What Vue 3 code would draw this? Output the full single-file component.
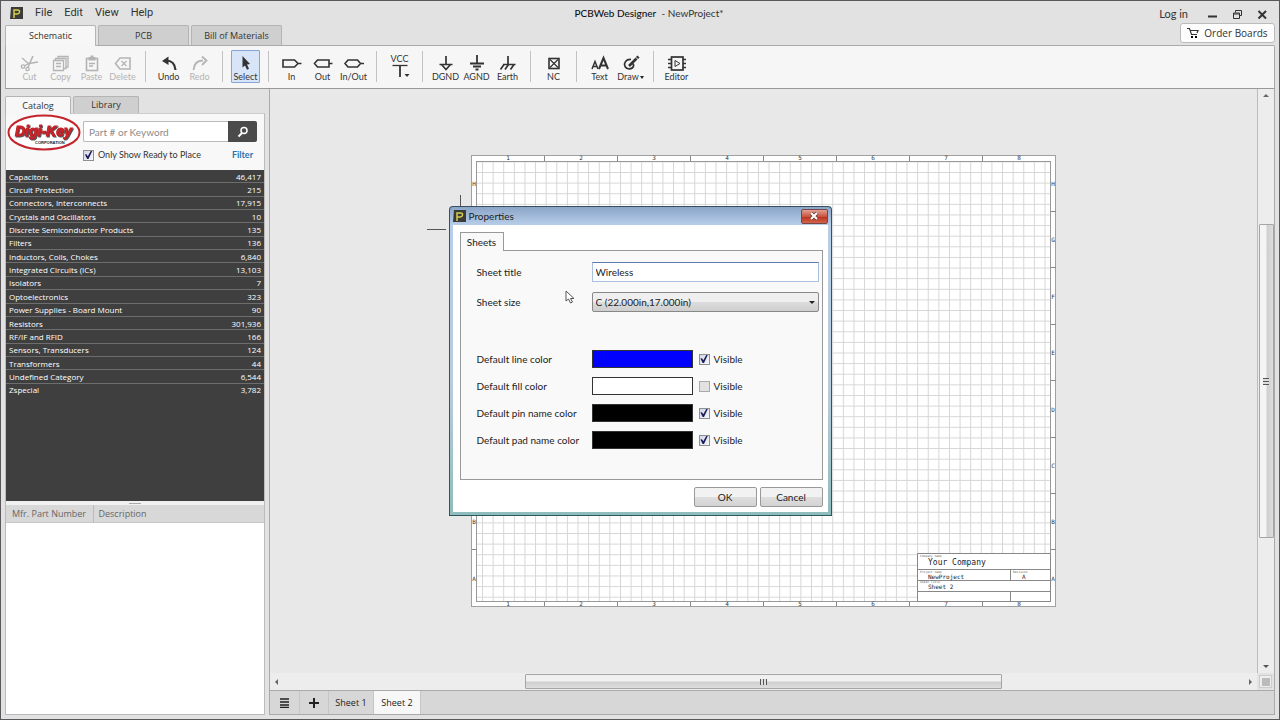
<script setup>
import { ref } from 'vue'

const menus = ['File', 'Edit', 'View', 'Help']
const workspaces = ['Schematic', 'PCB', 'Bill of Materials']

const tools = [
  { id: 'cut', label: 'Cut', off: true },
  { id: 'copy', label: 'Copy', off: true },
  { id: 'paste', label: 'Paste', off: true },
  { id: 'delete', label: 'Delete', off: true },
  { id: 's1' },
  { id: 'undo', label: 'Undo' },
  { id: 'redo', label: 'Redo', off: true },
  { id: 's2' },
  { id: 'select', label: 'Select', on: true },
  { id: 's3' },
  { id: 'in', label: 'In' },
  { id: 'out', label: 'Out' },
  { id: 'inout', label: 'In/Out' },
  { id: 's4' },
  { id: 'vcc', label: 'VCC', top: true },
  { id: 's5' },
  { id: 'dgnd', label: 'DGND' },
  { id: 'agnd', label: 'AGND' },
  { id: 'earth', label: 'Earth' },
  { id: 's6' },
  { id: 'nc', label: 'NC' },
  { id: 's7' },
  { id: 'text', label: 'Text' },
  { id: 'draw', label: 'Draw', drop: true },
  { id: 's8' },
  { id: 'editor', label: 'Editor' }
]

const icons = {
  cut: '<g fill="none" stroke="currentColor" stroke-width="1.3"><path d="M4 4 11 10M20 8 11 9.500 6 12"/><path d="M15 2 10 13" stroke-width="1.600"/><circle cx="5" cy="12.500" r="1.700"/><circle cx="9.500" cy="15" r="1.700"/></g>',
  copy: '<g fill="#f5f5f5" stroke="currentColor" stroke-width="1.3"><path d="M9 2.500H19V13H9Z"/><path d="M6.500 4.500H17V14.500H6.500Z"/><path d="M4.500 6.500H14.500V16.500H4.500Z"/><path d="M7 9.500H12M7 12.500H12"/></g>',
  paste: '<rect x="6.500" y="4.500" width="11" height="12" fill="none" stroke="currentColor" stroke-width="1.600"/><path d="M8.500 3H10.500V1.500H13.500V3H15.500V6.500H8.500Z" fill="currentColor"/><path d="M9 9.500H15M9 12H13" stroke="currentColor" stroke-width="1.500"/>',
  delete: '<path d="M9 4H19V15H9L4.500 9.500Z" fill="none" stroke="currentColor" stroke-width="1.600"/><path d="M10.500 7 15.500 12M15.500 7 10.500 12" stroke="currentColor" stroke-width="1.200"/>',
  undo: '<path d="M9 6.500C15 6.500 18 10 18.500 16" fill="none" stroke="currentColor" stroke-width="2.200"/><path d="M5 7 11.500 2.500V11Z" fill="currentColor"/>',
  redo: '<path d="M15 6.500C9 6.500 6 10 5.500 16" fill="none" stroke="currentColor" stroke-width="1.800"/><path d="M14 2.500 18.500 6.500 14 11" fill="none" stroke="currentColor" stroke-width="1.800"/>',
  select: '<path d="M8.500 2V13.500L11 11.500 13 15.800 15 14.800 13 10.500 16 10Z" fill="currentColor"/>',
  in: '<path d="M3 6H14.500L18 9.500 14.500 13H3ZM18 9.500H21.500" fill="none" stroke="currentColor" stroke-width="1.600"/>',
  out: '<path d="M6.500 6H18V13H6.500L3.500 9.500ZM18 9.500H21.500" fill="none" stroke="currentColor" stroke-width="1.600"/>',
  inout: '<path d="M6 6H15.500L18.500 9.500 15.500 13H6L3 9.500ZM18.500 9.500H22" fill="none" stroke="currentColor" stroke-width="1.600"/>',
  vcc: '<path d="M4.500 1.500H19.500" stroke="currentColor" stroke-width="1.300"/><path d="M12 1.500V13" stroke="currentColor" stroke-width="1.800"/><path d="M16.500 10H21.500L19 13Z" fill="currentColor"/>',
  dgnd: '<path d="M12 2V10M5.500 10.500H18.500M7.500 10.500 12 15.500 16.500 10.500" fill="none" stroke="currentColor" stroke-width="1.700"/>',
  agnd: '<path d="M12 1V9.500M5 9.500H19M8 12.500H16M10.500 15.500H13.500" fill="none" stroke="currentColor" stroke-width="1.800"/>',
  earth: '<path d="M12 2V10M7 10.500H19.500M8 10.500 4.500 15.500M12.500 10.500 9 15.500M18 10.500 14.500 15.500" fill="none" stroke="currentColor" stroke-width="1.700"/>',
  nc: '<rect x="7" y="4.500" width="10" height="10" fill="none" stroke="currentColor" stroke-width="1.600"/><path d="M8 5.500 16 13.500M16 5.500 8 13.500" stroke="currentColor" stroke-width="1.200"/>',
  text: '<path d="M4 15 7 7.500 10 15M5 12.500H9" fill="none" stroke="currentColor" stroke-width="1.500"/><path d="M11 15 15.500 4 20 15M12.500 11.500H18.500" fill="none" stroke="currentColor" stroke-width="2"/>',
  draw: '<path d="M12 5.500C7 5 4.500 9 6 12.500 8 16 13.500 15.500 14.500 12 15 10.500 14 9.500 13 9.500" fill="none" stroke="currentColor" stroke-width="1.700"/><path d="M10 12 17.500 4.500" stroke="currentColor" stroke-width="2.600"/><path d="M18 4 19.500 2.500" stroke="currentColor" stroke-width="3"/>',
  editor: '<rect x="6.500" y="3" width="11.500" height="13" fill="none" stroke="currentColor" stroke-width="1.700"/><path d="M3 5.500H6.500M3 9.500H6.500M3 13.500H6.500M18 5.500H21M18 9.500H21M18 13.500H21" stroke="currentColor" stroke-width="1.700"/><path d="M10 6.500V12.500L15 9.500Z" fill="none" stroke="currentColor"/>'
}

const categories = [
  ['Capacitors', '46,417'],
  ['Circuit Protection', '215'],
  ['Connectors, Interconnects', '17,915'],
  ['Crystals and Oscillators', '10'],
  ['Discrete Semiconductor Products', '135'],
  ['Filters', '136'],
  ['Inductors, Coils, Chokes', '6,840'],
  ['Integrated Circuits (ICs)', '13,103'],
  ['Isolators', '7'],
  ['Optoelectronics', '323'],
  ['Power Supplies - Board Mount', '90'],
  ['Resistors', '301,936'],
  ['RF/IF and RFID', '166'],
  ['Sensors, Transducers', '124'],
  ['Transformers', '44'],
  ['Undefined Category', '6,544'],
  ['Zspecial', '3,782']
]

const letters = ['H', 'G', 'F', 'E', 'D', 'C', 'B', 'A']
const readyOnly = ref(true)
const title = ref('Wireless')
const colors = ref([
  { id: 'line', label: 'Default line color', value: '#0000ff', visible: true },
  { id: 'fill', label: 'Default fill color', value: '#ffffff', visible: false },
  { id: 'pin', label: 'Default pin name color', value: '#000000', visible: true },
  { id: 'pad', label: 'Default pad name color', value: '#000000', visible: true }
])
</script>

<template>
  <div class="app">
    <header class="titlebar">
      <nav class="menu">
        <svg class="logo" viewBox="0 0 13 12" width="13" height="12" aria-hidden="true">
          <path d="M1 0H13V12H0Z" fill="#3b3b38" />
          <path d="M4 11V3H7.500Q10 3 9.500 5.200T6.500 7H4" fill="none" stroke="#d6cf4c" stroke-width="1.500" />
        </svg>
        <button v-for="m in menus" :key="m" type="button">{{ m }}</button>
      </nav>
      <h1><b>PCBWeb Designer</b> &nbsp;- NewProject*</h1>
      <div class="window-tools">
        <a href="#">Log in</a>
        <button type="button" aria-label="Minimize"><svg width="11" height="11" viewBox="0 0 11 11"><path d="M1 7.500H10" stroke="currentColor" stroke-width="2" /></svg></button>
        <button type="button" aria-label="Restore"><svg width="11" height="11" viewBox="0 0 11 11"><g fill="none" stroke="currentColor"><path d="M3.500 3.500V1.500H9.500V6.500H7.500" /><path d="M1.500 4H7.500V9.500H1.500ZM1.500 5H7.500" /></g></svg></button>
        <button type="button" aria-label="Close"><svg width="11" height="11" viewBox="0 0 11 11"><path d="M1.500 2 9 9.500M9 2 1.500 9.500" stroke="currentColor" stroke-width="2" /></svg></button>
      </div>
    </header>

    <div class="workspace-row">
      <button v-for="(w, i) in workspaces" :key="w" type="button" class="tab wtab" :class="{ active: i === 0 }">{{ w }}</button>
      <button type="button" class="order">
        <svg width="12" height="12" viewBox="0 0 12 12" aria-hidden="true">
          <path d="M0 1.500H2.500L4.500 7.500H10M3 3.500H11L10 6" fill="none" stroke="currentColor" stroke-width="1.200" />
          <rect x="4" y="9" width="2" height="2" /><rect x="8" y="9" width="2" height="2" />
        </svg>
        Order Boards
      </button>
    </div>

    <div class="toolbar" role="toolbar">
      <template v-for="t in tools" :key="t.id">
        <span v-if="!t.label" class="sep"></span>
        <button v-else type="button" class="tool" :class="{ off: t.off, on: t.on, top: t.top }">
          <svg width="24" height="18" viewBox="0 0 24 18" aria-hidden="true" v-html="icons[t.id]"></svg>
          <span>{{ t.label }}<i v-if="t.drop" class="caret"></i></span>
        </button>
      </template>
    </div>

    <div class="body">
      <aside class="side">
        <div class="side-tabs">
          <button type="button" class="tab stab active">Catalog</button>
          <button type="button" class="tab stab">Library</button>
        </div>
        <section class="catalog">
          <form class="search" @submit.prevent>
            <svg class="brand" width="74" height="38" viewBox="0 0 74 38" role="img" aria-label="Digi-Key Corporation">
              <ellipse cx="37" cy="18.500" rx="35.500" ry="17" fill="#fff" stroke="#c4242b" stroke-width="2" />
              <text x="8" y="22" class="brand-name">Digi-Key</text>
              <text x="28" y="30" class="brand-sub">CORPORATION</text>
            </svg>
            <div class="search-fields">
              <div class="search-box">
                <input type="text" placeholder="Part # or Keyword" aria-label="Part # or Keyword">
                <button type="submit" aria-label="Search">
                  <svg width="12" height="12" viewBox="0 0 12 12"><circle cx="7" cy="4.500" r="3" fill="none" stroke="#fff" stroke-width="1.500" /><path d="M5 7 1.500 10.500" stroke="#fff" stroke-width="2" /></svg>
                </button>
              </div>
              <div class="search-options">
                <label><input v-model="readyOnly" type="checkbox">Only Show Ready to Place</label>
                <a href="#">Filter</a>
              </div>
            </div>
          </form>
          <div class="category-list">
            <table>
              <tbody>
                <tr v-for="c in categories" :key="c[0]"><td>{{ c[0] }}</td><td>{{ c[1] }}</td></tr>
              </tbody>
            </table>
          </div>
          <div class="splitter"></div>
          <div class="parts">
            <table>
              <thead><tr><th>Mfr. Part Number</th><th>Description</th></tr></thead>
            </table>
          </div>
        </section>
      </aside>

      <main class="editor">
        <div class="canvas">
          <svg class="sheet" width="629" height="453" viewBox="427 155 629 453">
            <defs>
              <pattern id="grid" x="482" y="172" width="10.613" height="10.618" patternUnits="userSpaceOnUse">
                <path d="M.5 0V10.618M0 .5H10.613" stroke="#d6d6d6" fill="none" />
              </pattern>
            </defs>
            <path d="M460.500 195V229M427 229.500H446" stroke="#555" />
            <rect x="471.500" y="155.500" width="584" height="451" fill="#fff" stroke="#a0a0a0" />
            <rect x="477" y="161" width="574" height="441" fill="url(#grid)" />
            <rect x="476.500" y="161.500" width="574" height="440" fill="none" stroke="#999" />
            <g class="ruler">
              <template v-for="n in 8" :key="n">
                <text :x="435 + n * 73" y="160">{{ n }}</text>
                <text :x="435 + n * 73" y="606">{{ n }}</text>
                <path v-if="n < 8" :d="`M${471.5 + n * 73} 156V161M${471.5 + n * 73} 602V606`" />
              </template>
              <template v-for="(l, i) in letters" :key="l">
                <text x="474" :y="186 + i * 56.4">{{ l }}</text>
                <text x="1053" :y="186 + i * 56.4">{{ l }}</text>
                <path v-if="i < 7" :d="`M472 ${Math.round(212 + i * 56.4) - .5}H477M1051 ${Math.round(212 + i * 56.4) - .5}H1056`" />
              </template>
            </g>
            <path d="M917.500 553.500H1050.500V601.500H917.500ZM917.500 569.500H1050.500M917.500 580.500H1050.500M917.500 591.500H1050.500M1010.500 569.500V580.500M1010.500 591.500V601.500" fill="#fff" stroke="#888" />
            <g class="stamp">
              <text x="928" y="565" class="large">Your Company</text>
              <text x="928" y="579">NewProject</text>
              <text x="1022" y="579">A</text>
              <text x="928" y="589">Sheet 2</text>
              <text x="920" y="557" class="tiny">Company name</text>
              <text x="920" y="573" class="tiny">Project name</text>
              <text x="1013" y="573" class="tiny">Revision</text>
              <text x="920" y="583" class="tiny">Sheet Title</text>
            </g>
          </svg>
        </div>
        <div class="vscroll">
          <i class="arrow up"></i><span class="before"></span><span class="thumb"><i class="grip"></i></span><span class="after"></span><i class="arrow down"></i>
        </div>
        <div class="hscroll">
          <i class="arrow left"></i><span class="before"></span><span class="thumb"><i class="grip"></i></span><span class="after"></span><i class="arrow right"></i>
        </div>
        <div class="corner"></div>
        <nav class="sheets">
          <button type="button" class="icon" aria-label="Sheet list"><svg width="9" height="10" viewBox="0 0 9 10"><path d="M0 1H9M0 4H9M0 7H9M0 9.500H9" stroke="currentColor" stroke-width="1.500" /></svg></button>
          <button type="button" class="icon" aria-label="Add sheet"><svg width="10" height="10" viewBox="0 0 10 10"><path d="M0 5H10M5 0V10" stroke="currentColor" stroke-width="2" /></svg></button>
          <button type="button">Sheet 1</button>
          <button type="button" class="active">Sheet 2</button>
        </nav>
      </main>
    </div>

    <div class="overlay">
      <div class="dialog" role="dialog" aria-labelledby="dialog-title">
        <div class="dialog-title">
          <svg class="logo" viewBox="0 0 13 12" width="13" height="12" aria-hidden="true">
            <path d="M1 0H13V12H0Z" fill="#3b3b38" />
            <path d="M4 11V3H7.500Q10 3 9.500 5.200T6.500 7H4" fill="none" stroke="#d6cf4c" stroke-width="1.500" />
          </svg>
          <h2 id="dialog-title">Properties</h2>
          <button type="button" aria-label="Close dialog"><svg width="10" height="8" viewBox="0 0 10 8"><path d="M2 1 8 7M8 1 2 7" stroke="#6b3a35" stroke-width="3.500" /><path d="M2 1 8 7M8 1 2 7" stroke="#fff" stroke-width="2" /></svg></button>
        </div>
        <form class="dialog-body" @submit.prevent>
          <button type="button" class="sheet-tab">Sheets</button>
          <div class="panel">
            <div class="row">
              <label for="sheet-title">Sheet title</label>
              <input id="sheet-title" v-model="title" type="text">
            </div>
            <div class="row">
              <label for="sheet-size">Sheet size</label>
              <div class="select-box">
                <select id="sheet-size"><option>C (22.000in,17.000in)</option></select>
                <i class="caret"></i>
              </div>
            </div>
            <div class="colors">
              <div v-for="c in colors" :key="c.id" class="row color-row">
                <label :for="`color-${c.id}`">{{ c.label }}</label>
                <input :id="`color-${c.id}`" v-model="c.value" type="color">
                <label class="visible"><input v-model="c.visible" type="checkbox">Visible</label>
              </div>
            </div>
          </div>
          <div class="actions">
            <button type="submit">OK</button>
            <button type="button">Cancel</button>
          </div>
        </form>
        <svg class="pointer" width="12" height="15" viewBox="0 0 12 15" aria-hidden="true"><path d="M1 1V11L3.500 9 5.500 13 7.500 12 5.500 8.500H9Z" fill="#fff" stroke="#555" /></svg>
      </div>
    </div>
  </div>
</template>

<style>
html, body { margin: 0; height: 100%; }
#app { height: 100%; }
</style>

<style scoped>
* { box-sizing: border-box; }
.app {
  position: relative;
  display: flex;
  flex-direction: column;
  height: 100vh;
  padding: 0 4px 4px;
  border: 1px solid #59575b;
  background: #e2e2e2;
  color: #333;
  font: 10px/14px Lato, "Open Sans", sans-serif;
}
button, input, select { font: inherit; color: inherit; margin: 0; }
button { padding: 0; border: 0; background: none; white-space: nowrap; }
a { text-decoration: none; color: inherit; }
svg { display: block; flex: none; }

.titlebar { display: grid; grid-template-columns: 1fr auto 1fr; align-items: center; height: 24px; flex: none; }
.menu { display: flex; align-items: center; gap: 12px; padding-left: 5px; font: 11px/14px Roboto, sans-serif; }
h1 { margin: 0; padding-left: 18px; font: 10px/14px Lato, sans-serif; }
h1 b { font-weight: 500; color: #111; }
.window-tools { display: flex; align-items: center; justify-content: flex-end; gap: 14px; padding: 2px 7px 0 0; }
.window-tools a { margin-right: 5px; font-size: 11px; }

.workspace-row { display: flex; align-items: stretch; gap: 2px; height: 20px; flex: none; }
.tab { border: 1px solid #b4b4b4; border-bottom: 0; border-radius: 2px 2px 0 0; background: #cfcfcf; font: 500 9px/14px "Open Sans", sans-serif; }
.tab.active { position: relative; background: #f7f7f7; margin-bottom: -1px; }
.wtab { width: 91px; color: #333; }
.stab { font-weight: 400; }
.order {
  display: flex; align-items: center; justify-content: center; gap: 5px;
  width: 95px; height: 20px; margin: -2px 0 0 auto;
  border: 1px solid #bbb; border-radius: 3px; background: #fdfdfd; font-family: "Open Sans", sans-serif;
}

.toolbar {
  display: flex; align-items: flex-start; flex: none; height: 44px; padding: 4px 8px 0;
  border: 1px solid #aaa; border-bottom-color: #999; border-radius: 0 2px 0 0; background: #f6f6f6; font-size: 9px;
}
.tool { display: flex; flex-direction: column; align-items: center; width: 31px; height: 33px; padding-top: 4px; line-height: 10px; }
.tool.off { color: #b4b4b4; }
.tool.on { width: 29px; margin: 0 1px; padding-top: 3px; border: 1px solid #86a5d4; background: #d8e5f8; border-radius: 1px; }
.tool.top { flex-direction: column-reverse; justify-content: flex-end; }
.sep { width: 1px; height: 31px; margin: 1px 7px; background: #c2c2c2; }
.caret { display: inline-block; border: 3px solid transparent; border-top-color: #222; border-bottom: 0; vertical-align: middle; }
.tool .caret { border-width: 3px 2px 0; margin-left: 1px; }

.body { display: flex; flex: 1; min-height: 0; }
.side { display: flex; flex-direction: column; width: 264px; flex: none; padding-top: 7px; padding-right: 4px; }
.side-tabs { display: flex; gap: 2px; height: 17px; flex: none; }
.stab { width: 66px; }
.catalog { display: flex; flex-direction: column; flex: 1; min-height: 0; border: 1px solid #bbb; border-top-color: #ccc; background: #f8f8f8; }
.search { display: flex; gap: 2px; height: 56px; padding-left: 1px; flex: none; }
.brand-name { font: italic 900 14px "Liberation Sans", sans-serif; fill: #d7262c; stroke: #c01f26; filter: drop-shadow(1px 1px 0 #555); }
.brand-sub { font: bold 4px "Liberation Sans", sans-serif; fill: #222; }
.search-fields { flex: 1; padding: 7px 7px 0 0; }
.search-box { display: flex; height: 21px; }
.search-box input { flex: 1; min-width: 0; padding: 0 5px; border: 1px solid #bbb; border-right: 0; border-radius: 2px 0 0 2px; background: #fff; outline: 0; }
.search-box input::placeholder { color: #8a8a8a; }
.search-box button { display: grid; place-items: center; width: 29px; background: #4a4a4a; border-radius: 0 2px 2px 0; }
.search-options { display: flex; justify-content: space-between; padding: 6px 4px 0 0; font-size: 9px; }
.search-options a { color: #2874ae; font-weight: bold; }
label { white-space: nowrap; }
input[type="checkbox"] { appearance: none; position: relative; width: 11px; height: 11px; flex: none; border: 1px solid #8e8f8f; background: linear-gradient(135deg, #d4d8e6, #f7f7fb); }
input[type="checkbox"]:not(:checked) { border-color: #aaa; background: #e2e2e2; }
input[type="checkbox"]:checked::before { content: ""; display: block; width: 9px; height: 9px; background: #1b1f5a; clip-path: polygon(10% 45%, 28% 42%, 42% 65%, 75% 5%, 92% 5%, 50% 95%, 35% 95%); }
.search-options label, .visible { display: flex; align-items: center; gap: 4px; }
.category-list { flex: 1; min-height: 0; background: #3f3f3f; color: #fff; font: 8px/11px "Open Sans", sans-serif; overflow: hidden; }
table { width: 100%; border-collapse: collapse; }
.category-list table { height: 226px; }
.category-list td { padding: 0 3px; border-bottom: 1px solid #6d6d6d; }
.category-list tr:last-child td { border-bottom: 0; }
.category-list td:last-child { text-align: right; }
.splitter { height: 4px; flex: none; background: linear-gradient(#aaa, #aaa) center / 12px 1px no-repeat #f1f1f1; }
.parts { height: 209px; flex: none; background: #fff; }
.parts th { height: 17px; padding: 0 6px; border-bottom: 1px solid #c6c6c6; background: #d8d8d8; color: #666; text-align: left; font: 500 9px/17px "Open Sans", sans-serif; }
.parts th:first-child { width: 87px; border-right: 1px solid #bbb; white-space: nowrap; }
.parts th:last-child { padding-left: 5px; }

.editor { display: grid; grid-template: minmax(0, 1fr) 17px 24px / minmax(0, 1fr) 17px; flex: 1; min-width: 0; border: 1px solid #aaa; border-top: 0; }
.canvas { position: relative; overflow: hidden; background: #e8e8e8; }
.sheet { position: absolute; left: 157px; top: 66px; }
.ruler text { font: 6px "DejaVu Sans Mono", monospace; text-anchor: middle; fill: #333; }
.ruler path { stroke: #888; }
.stamp text { font: 6px "DejaVu Sans Mono", monospace; fill: #222; }
.stamp .large { font-size: 8px; }
.stamp .tiny { font-size: 3px; fill: #666; }
.vscroll, .hscroll { display: flex; align-items: center; background: #ededed; }
.vscroll { flex-direction: column; border-left: 1px solid #bbb; padding: 5px 0; }
.hscroll { padding: 0 5px; }
.vscroll .before { flex: 126; }
.vscroll .thumb { flex: 309; width: 15px; background: linear-gradient(90deg, #f4f4f4 45%, #cfcfcf 55%, #ddd); }
.vscroll .after { flex: 126; }
.hscroll .before { flex: 245; }
.hscroll .thumb { flex: 473; height: 15px; background: linear-gradient(#f0f0f0 45%, #cfcfcf 55%, #ddd); }
.hscroll .after { flex: 245; }
.thumb { display: grid; place-items: center; border: 1px solid #a5a5a5; border-radius: 1px; }
.grip { width: 7px; height: 6px; background: repeating-linear-gradient(90deg, #555 0 1px, #ddd 1px 3px); }
.vscroll .grip { width: 6px; height: 7px; background: repeating-linear-gradient(#555 0 1px, #ddd 1px 3px); }
.arrow { border: 3px solid transparent; }
.up { border-top: 0; border-bottom-color: #666; }
.down { border-bottom: 0; border-top-color: #555; }
.left { border-left: 0; border-right-color: #666; }
.right { border-right: 0; border-left-color: #666; }
.corner { margin: 2px; border: 1px solid #ccc; background: linear-gradient(#bbb, #bbb) center / 8px 8px no-repeat #eee; }
.sheets { grid-column: 1 / 3; display: flex; border-top: 1px solid #aaa; background: #d7d7d7; font: 9px/14px "Open Sans", sans-serif; }
.sheets button { display: grid; place-items: center; width: 47px; border-right: 1px solid #c6c6c6; color: #222; }
.sheets .icon { width: 29px; }
.sheets .icon:first-child { width: 30px; }
.sheets button:nth-child(3) { width: 45px; }
.sheets .active { background: #f7f7f7; }

.overlay { position: absolute; inset: 0; display: grid; place-items: center; padding-top: 2px; }
.dialog { position: relative; width: 383px; padding: 0 3px 3px; border: 1px solid #38505f; border-bottom-color: #2c5a5c; border-radius: 4px 4px 0 0; background: linear-gradient(#8ba5c8, #b7cee9 18px, #b8ccdb 60%, #8fbcbc); color: #222; }
.dialog-title { display: flex; align-items: center; gap: 3px; height: 18px; }
h2 { flex: 1; margin: 0; font: inherit; }
.dialog-title button { display: grid; place-items: center; width: 27px; height: 15px; border: 1px solid #7b4546; border-radius: 2px; background: linear-gradient(#dfa095, #c9553f 50%, #b93420 55%, #d2644a); }
.dialog-body { padding: 7px 5px 5px 7px; background: #fff; }
.sheet-tab { display: block; position: relative; width: 44px; height: 19px; margin-bottom: -1px; border: 1px solid #999; border-bottom: 0; background: #f9f9f9; }
.panel { height: 230px; padding: 11px 3px 0 16px; border: 1px solid #999; background: #f9f9f9; }
.row { display: grid; grid-template-columns: 115px 1fr; align-items: center; margin-bottom: 10px; }
.row input[type="text"], .row select { width: 100%; height: 20px; padding: 0 3px; }
.row input[type="text"] { border: 1px solid #a9c0e0; border-top-color: #5d7ca8; background: #fff; outline: 0; }
.select-box { position: relative; }
.row select { display: block; appearance: none; border: 1px solid #888; border-radius: 2px; background: linear-gradient(#efefef 48%, #dcdcdc 50%, #cfcfcf); }
.select-box .caret { position: absolute; right: 4px; top: 9px; }
.colors { display: grid; gap: 9px; padding-top: 28px; }
.color-row { grid-template-columns: 115px 101px 1fr; margin: 0; height: 18px; }
.color-row input[type="color"] { appearance: none; width: 101px; height: 18px; padding: 0; border: 1px solid #333; background: none; }
.color-row input::-webkit-color-swatch-wrapper { padding: 0; }
.color-row input::-webkit-color-swatch { border: 0; border-radius: 0; }
.visible { padding-left: 6px; }
.visible input { margin: 0; }
.actions { display: flex; justify-content: flex-end; gap: 3px; padding-top: 7px; }
.actions button { width: 63px; height: 20px; border: 1px solid #999; border-radius: 2px; background: linear-gradient(#f2f2f2 48%, #dedede 50%, #d3d3d3); }
.pointer { position: absolute; left: 115px; top: 83px; }
</style>
